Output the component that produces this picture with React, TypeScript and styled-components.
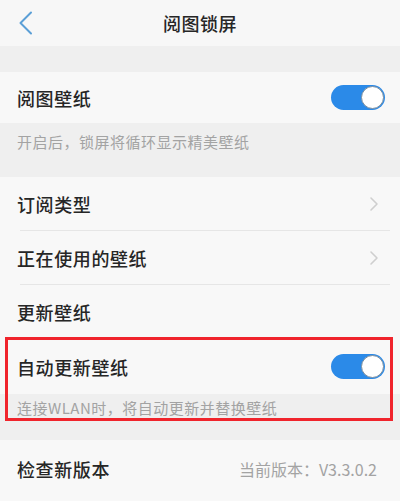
import React, { FC } from 'react';
import styled, { createGlobalStyle } from 'styled-components';

const colors = {
  page: '#f8f8f8',
  band: '#efefef',
  text: '#262626',
  hint: '#a3a3a3',
  line: '#e6e6e6',
  blue: '#2b8ae8',
  accent: '#5b9fd6',
  red: '#f0242c',
};

const GlobalStyle = createGlobalStyle`
  html, body {
    margin: 0;
    padding: 0;
    background: ${colors.page};
  }
  body {
    font-family: "Noto Sans CJK SC", "Noto Sans", sans-serif;
    -webkit-font-smoothing: antialiased;
  }
`;

const Screen = styled.div`
  width: 400px;
  height: 501px;
  overflow: hidden;
  background: ${colors.page};
  display: flex;
  flex-direction: column;
`;

const Header = styled.header`
  height: 46px;
  flex: none;
  display: grid;
  grid-template-columns: 60px 1fr 60px;
  align-items: center;
  background: #f7f7f7;
`;

const BackButton = styled.div`
  display: flex;
  align-items: center;
  padding-left: 18px;
  height: 100%;
`;

const Title = styled.h1`
  margin: 0;
  text-align: center;
  font-size: 18px;
  font-weight: 500;
  color: ${colors.text};
  letter-spacing: 0.5px;
`;

const Gap = styled.div<{ $h: number }>`
  height: ${({ $h }) => $h}px;
  flex: none;
  background: ${colors.band};
`;

const Row = styled.div<{ $h?: number; $divider?: boolean }>`
  position: relative;
  height: ${({ $h }) => $h ?? 54}px;
  flex: none;
  display: flex;
  align-items: center;
  justify-content: space-between;
  padding: 0 15px 0 17px;
  background: ${colors.page};

  ${({ $divider }) =>
    $divider &&
    `
    &::after {
      content: '';
      position: absolute;
      left: 20px;
      right: 10px;
      bottom: 0;
      height: 1px;
      background: ${colors.line};
    }
  `}
`;

const Label = styled.span`
  font-size: 18px;
  font-weight: 500;
  color: ${colors.text};
  letter-spacing: 0.6px;
`;

const Note = styled.div<{ $h: number; $top?: number }>`
  height: ${({ $h }) => $h}px;
  flex: none;
  box-sizing: border-box;
  padding: ${({ $top }) => $top ?? 9}px 17px 0;
  background: ${colors.band};
  font-size: 15px;
  line-height: 20px;
  color: ${colors.hint};
  letter-spacing: 0.5px;
`;

const Value = styled.span`
  font-size: 16px;
  color: ${colors.hint};
  margin-right: 8px;
`;

const Highlight = styled.div`
  position: relative;
  display: flex;
  flex-direction: column;

  &::after {
    content: '';
    position: absolute;
    left: 5px;
    right: 7px;
    top: -2px;
    bottom: 0;
    border: 3px solid ${colors.red};
    pointer-events: none;
  }
`;

const Track = styled.div<{ $on: boolean }>`
  width: 54px;
  height: 25px;
  box-sizing: border-box;
  border-radius: 13px;
  background: ${({ $on }) => ($on ? colors.blue : '#ddd')};
  display: flex;
  align-items: center;
  justify-content: ${({ $on }) => ($on ? 'flex-end' : 'flex-start')};
  padding: 0 1px;
`;

const Knob = styled.div`
  width: 23px;
  height: 23px;
  box-sizing: border-box;
  border-radius: 50%;
  background: #fff;
  border: 1.5px solid #7c8e9e;
`;

const Toggle: FC<{ on?: boolean }> = ({ on = true }) => (
  <Track $on={on}>
    <Knob />
  </Track>
);

const Chevron: FC = () => (
  <svg width="10" height="16" viewBox="0 0 10 16" style={{ marginRight: 6 }}>
    <path d="M2 2 L8 8 L2 14" fill="none" stroke="#cfcfcf" strokeWidth="1.6" strokeLinecap="round" strokeLinejoin="round" />
  </svg>
);

const BackIcon: FC = () => (
  <svg width="16" height="24" viewBox="0 0 16 24">
    <path d="M13 1.5 L2.5 12 L13 22.5" fill="none" stroke={colors.accent} strokeWidth="2" strokeLinecap="round" strokeLinejoin="round" />
  </svg>
);

const App: FC = () => (
  <Screen>
    <GlobalStyle />
    <Header>
      <BackButton>
        <BackIcon />
      </BackButton>
      <Title>阅图锁屏</Title>
      <div />
    </Header>
    <Gap $h={26} />

    <Row $h={51}>
      <Label>阅图壁纸</Label>
      <Toggle />
    </Row>
    <Note $h={54}>开启后，锁屏将循环显示精美壁纸</Note>

    <Row $divider>
      <Label>订阅类型</Label>
      <Chevron />
    </Row>
    <Row $divider>
      <Label>正在使用的壁纸</Label>
      <Chevron />
    </Row>
    <Row>
      <Label>更新壁纸</Label>
    </Row>

    <Highlight>
      <Row $h={55}>
        <Label>自动更新壁纸</Label>
        <Toggle />
      </Row>
      <Note $h={27} $top={4}>连接WLAN时，将自动更新并替换壁纸</Note>
    </Highlight>
    <Gap $h={19} />

    <Row $h={58}>
      <Label>检查新版本</Label>
      <Value>当前版本：V3.3.0.2</Value>
    </Row>
  </Screen>
);

export default App;
